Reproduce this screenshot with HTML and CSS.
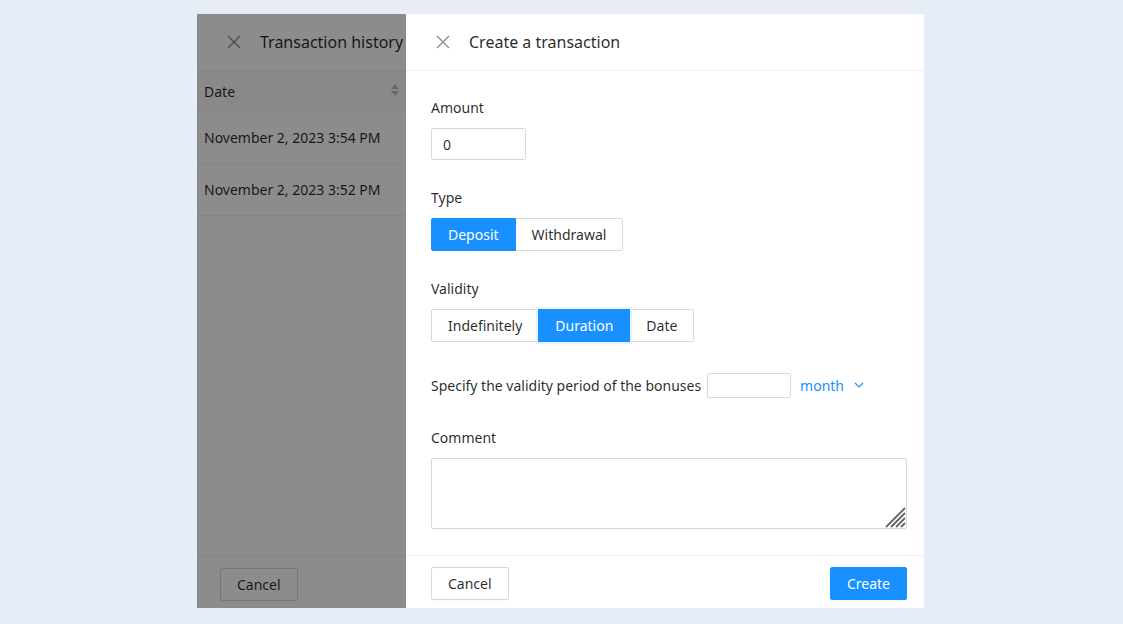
FILE: index.html
```html
<!DOCTYPE html>
<html lang="en">
<head>
    <meta charset="UTF-8">
    <meta name="viewport" content="width=device-width, initial-scale=1.0">
    <title>Create a transaction</title>
    <link rel="stylesheet" href="styles.css">
</head>
<body>

<div class="frame">
    <!-- drawer underneath: transaction history -->
    <div class="drawer history">
        <div class="drawer-header">
            <span class="close">
                <svg width="14" height="14" viewBox="0 0 14 14"><path d="M1 1L13 13M13 1L1 13" stroke="currentColor" stroke-width="1.4"/></svg>
            </span>
            <span class="drawer-title">Transaction history</span>
        </div>
        <div class="drawer-body history-body">
            <table class="history-table">
                <thead>
                    <tr>
                        <th>
                            <span>Date</span>
                            <span class="sorter">
                                <svg width="8" height="12" viewBox="0 0 8 12"><path d="M4 0L8 5H0Z M4 12L8 7H0Z" fill="currentColor"/></svg>
                            </span>
                        </th>
                        <th></th>
                    </tr>
                </thead>
                <tbody>
                    <tr><td>November 2, 2023 3:54 PM</td><td></td></tr>
                    <tr><td>November 2, 2023 3:52 PM</td><td></td></tr>
                </tbody>
            </table>
        </div>
        <div class="drawer-footer">
            <button class="btn">Cancel</button>
        </div>
    </div>

    <div class="mask"></div>

    <!-- drawer on top: new transaction form -->
    <div class="drawer create">
        <div class="drawer-header">
            <span class="close">
                <svg width="14" height="14" viewBox="0 0 14 14"><path d="M1 1L13 13M13 1L1 13" stroke="currentColor" stroke-width="1.4"/></svg>
            </span>
            <span class="drawer-title">Create a transaction</span>
        </div>
        <form class="drawer-body form">
            <div class="form-item">
                <label class="form-label" for="amount">Amount</label>
                <input class="input amount" id="amount" type="text" value="0">
            </div>
            <div class="form-item">
                <div class="form-label">Type</div>
                <div class="radio-group">
                    <span class="radio-btn checked">Deposit</span>
                    <span class="radio-btn">Withdrawal</span>
                </div>
            </div>
            <div class="form-item">
                <div class="form-label">Validity</div>
                <div class="radio-group">
                    <span class="radio-btn">Indefinitely</span>
                    <span class="radio-btn checked focused">Duration</span>
                    <span class="radio-btn">Date</span>
                </div>
            </div>
            <div class="form-item period">
                <span>Specify the validity period of the bonuses</span>
                <input class="input small" type="text">
                <span class="unit">month
                    <svg width="10" height="10" viewBox="0 0 10 10"><path d="M1 3L5 7L9 3" fill="none" stroke="currentColor" stroke-width="1.1"/></svg>
                </span>
            </div>
            <div class="form-item">
                <label class="form-label" for="comment">Comment</label>
                <div class="textarea-wrap">
                    <textarea class="input textarea" id="comment"></textarea>
                    <svg class="grip" width="22" height="22" viewBox="0 0 22 22">
                        <path d="M21 2L2 21M21 7L7 21M21 12L12 21M21 17L17 21" stroke="#666" stroke-width="1.8"/>
                    </svg>
                </div>
            </div>
        </form>
        <div class="drawer-footer split">
            <button class="btn">Cancel</button>
            <button class="btn primary">Create</button>
        </div>
    </div>
</div>

</body>
</html>
```

FILE: styles.css
```css
body {
    margin: 0;
    padding: 14px 0 16px 197px;
    background-color: #e6edf7;
    font-family: "Noto Sans", "Open Sans", sans-serif;
    font-size: 14px;
    color: rgba(0, 0, 0, 0.85);
}
.frame {
    position: relative;
    width: 727px;
    height: 594px;
    overflow: hidden;
    background: white;
}
.drawer {
    display: flex;
    flex-direction: column;
    background: white;
    height: 100%;
}
.drawer-header {
    display: flex;
    align-items: center;
    height: 56px;
    padding-left: 30px;
    border-bottom: 1px solid #f0f0f0;
    flex-shrink: 0;
}
.close {
    display: flex;
    color: rgba(0, 0, 0, 0.45);
    margin-right: 19px;
}
.drawer-title {
    font-size: 16px;
    color: rgba(0, 0, 0, 0.85);
}
.drawer-body {
    flex: 1;
    min-height: 0;
}
.drawer-footer {
    display: flex;
    height: 53px;
    padding: 12px 0 0 23px;
    box-sizing: border-box;
    border-top: 1px solid #f0f0f0;
    flex-shrink: 0;
}
.drawer-footer.split {
    justify-content: space-between;
    padding: 11px 17px 0 25px;
}

/* history table */
.history-table {
    border-collapse: collapse;
    width: 100%;
}
.history-table th,
.history-table td {
    text-align: left;
    font-weight: normal;
    padding: 0 7px;
    border-bottom: 1px solid #f0f0f0;
}
.history-table th {
    height: 40px;
    background: #fafafa;
}
.history-table th:first-child {
    width: 195px;
    padding-right: 10px;
    position: relative;
}
.history-table th:first-child::after {
    content: "";
    position: absolute;
    right: 0;
    top: 10px;
    height: 20px;
    width: 1px;
    background: #f0f0f0;
}
.history-table th span:first-child {
    float: left;
}
.sorter {
    float: right;
    display: flex;
    color: #bfbfbf;
    margin-top: 2px;
}
.history-table td {
    height: 51px;
}

.mask {
    position: absolute;
    inset: 0;
    background: rgba(0, 0, 0, 0.45);
}
.drawer.create {
    position: absolute;
    top: 0;
    right: 0;
    width: 518px;
}

/* form */
.form {
    display: flex;
    flex-direction: column;
    padding: 26px 17px 0 25px;
}
.form-item {
    display: flex;
    flex-direction: column;
    align-items: flex-start;
    margin-bottom: 27px;
}
.form-item:last-child {
    margin-bottom: 0;
}
.form-label {
    line-height: 22px;
    margin-bottom: 9px;
}
.input {
    box-sizing: border-box;
    border: 1px solid #d9d9d9;
    border-radius: 2px;
    font: inherit;
    color: rgba(0, 0, 0, 0.85);
    background: white;
    outline: none;
}
.amount {
    width: 95px;
    height: 32px;
    padding: 0 11px;
}
.radio-group {
    display: flex;
}
.radio-btn {
    height: 33px;
    line-height: 31px;
    padding: 0 16px;
    border: 1px solid #d9d9d9;
    box-sizing: border-box;
    margin-left: -1px;
    background: white;
}
.radio-btn:first-child {
    margin-left: 0;
    border-radius: 2px 0 0 2px;
}
.radio-btn:last-child {
    border-radius: 0 2px 2px 0;
}
.radio-btn.checked {
    background: #1890ff;
    border-color: #1890ff;
    color: white;
    position: relative;
}
.radio-btn.focused {
    box-shadow: 0 0 0 2px #e6f4ff;
}
.period {
    flex-direction: row;
    align-items: center;
    height: 32px;
    margin-bottom: 26px;
}
.input.small {
    width: 84px;
    height: 25px;
    margin-left: 6px;
}
.unit {
    display: flex;
    align-items: center;
    gap: 10px;
    color: #1890ff;
    margin-left: 9px;
}
.textarea-wrap {
    position: relative;
    width: 100%;
}
.textarea {
    display: block;
    width: 100%;
    height: 71px;
    resize: none;
    padding: 4px 11px;
}
.grip {
    position: absolute;
    right: 1px;
    bottom: 1px;
}
.btn {
    height: 33px;
    padding: 0 16px;
    font: inherit;
    color: rgba(0, 0, 0, 0.85);
    background: white;
    border: 1px solid #d9d9d9;
    border-radius: 2px;
    box-shadow: 0 2px 0 rgba(0, 0, 0, 0.016);
}
.btn.primary {
    background: #1890ff;
    border-color: #1890ff;
    color: white;
}
```
